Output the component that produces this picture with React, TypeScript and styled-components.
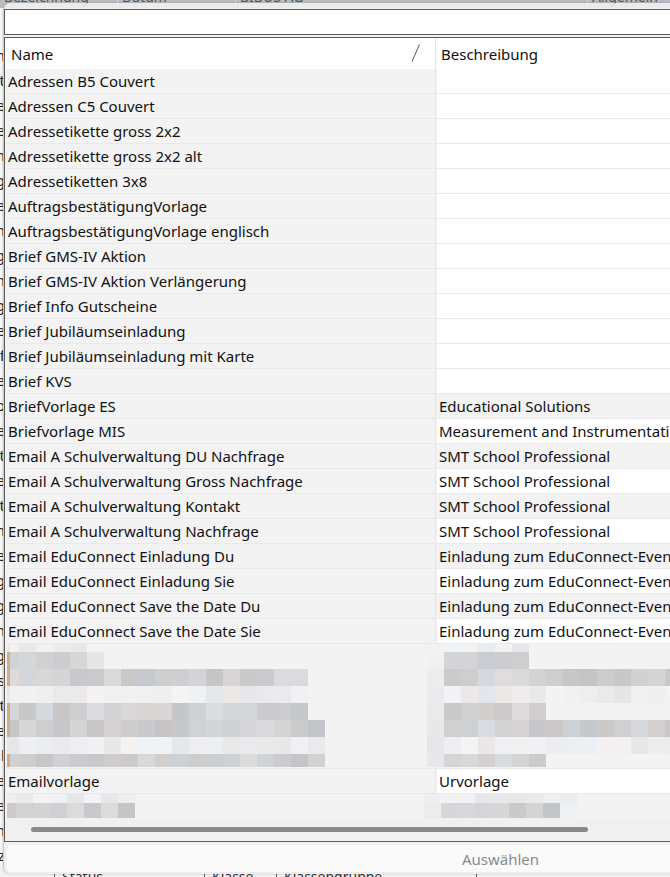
import React from 'react';
import styled, { createGlobalStyle } from 'styled-components';

type Template = {
  name: string;
  description?: string;
  redacted?: number;
};

const templates: Template[] = [
  { name: 'Adressen B5 Couvert' },
  { name: 'Adressen C5 Couvert' },
  { name: 'Adressetikette gross 2x2' },
  { name: 'Adressetikette gross 2x2 alt' },
  { name: 'Adressetiketten 3x8' },
  { name: 'AuftragsbestätigungVorlage' },
  { name: 'AuftragsbestätigungVorlage englisch' },
  { name: 'Brief GMS-IV Aktion' },
  { name: 'Brief GMS-IV Aktion Verlängerung' },
  { name: 'Brief Info Gutscheine' },
  { name: 'Brief Jubiläumseinladung' },
  { name: 'Brief Jubiläumseinladung mit Karte' },
  { name: 'Brief KVS' },
  { name: 'BriefVorlage ES', description: 'Educational Solutions' },
  { name: 'Briefvorlage MIS', description: 'Measurement and Instrumentation Solutions' },
  { name: 'Email A Schulverwaltung DU Nachfrage', description: 'SMT School Professional' },
  { name: 'Email A Schulverwaltung Gross Nachfrage', description: 'SMT School Professional' },
  { name: 'Email A Schulverwaltung Kontakt', description: 'SMT School Professional' },
  { name: 'Email A Schulverwaltung Nachfrage', description: 'SMT School Professional' },
  { name: 'Email EduConnect Einladung Du', description: 'Einladung zum EduConnect-Event' },
  { name: 'Email EduConnect Einladung Sie', description: 'Einladung zum EduConnect-Event' },
  { name: 'Email EduConnect Save the Date Du', description: 'Einladung zum EduConnect-Event' },
  { name: 'Email EduConnect Save the Date Sie', description: 'Einladung zum EduConnect-Event' },
  { name: '', redacted: 1 },
  { name: 'Emailvorlage', description: 'Urvorlage' },
  { name: '', redacted: 2 },
];

const backdropWords = [
  'Vorlagen', 'Couvert', 'Etikette', 'Etikette', 'Adressen', 'Auftrag', 'Vorlage',
  'Aktion', 'Verlängerung', 'Gutschein', 'Einladung', 'Karte', 'Brief', 'Offerte',
  'Info', 'Nachfrage', 'Kontakt', 'Schule', 'Event', 'Datum', 'Urvorlage', 'Rechnung',
  'Mahnung', 'Lieferschein', 'Quittung', 'Status', 'Bericht', 'Liste', 'Profil',
  'Gruppe', 'Klasse', 'Termin', 'Notiz', 'Export',
];

type Tone = 'gray' | 'light';
type Band = { y: number; h: number; tone: Tone; left: [number, number]; right: [number, number] };

const noise = (n: number) => {
  const v = Math.sin(n * 12.9898 + 78.233) * 43758.5453;
  return v - Math.floor(v);
};

const shade = (seed: number, tone: Tone) => {
  const r = noise(seed);
  const t = noise(seed + 0.37);
  const base = tone === 'gray' ? 196 + Math.round(r * 24) : 230 + Math.round(r * 13);
  const warm = Math.round((t - 0.5) * 6);
  return `rgb(${base + warm},${base},${base - warm + 2})`;
};

// columns of the pixel mask: name side snaps to 10/19+17k, description side to 427+17k
const leftCols = (from: number, to: number) => {
  const cols: [number, number][] = [[7, 10], [10, 19]];
  for (let x = 19; x < to; x += 17) cols.push([x, x + 17]);
  return cols.filter(([a]) => a >= from && a < to);
};

const rightCols = (from: number, to: number, anchor = 427) => {
  const cols: [number, number][] = [];
  for (let x = anchor; x < to; x += 17) cols.push([x, x + 17]);
  return cols.filter(([a]) => a >= from);
};

const maskBands: Record<number, Band[]> = {
  1: [
    { y: 0, h: 8, tone: 'light', left: [7, 87], right: [427, 529] },
    { y: 8, h: 17, tone: 'gray', left: [7, 104], right: [427, 529] },
    { y: 25, h: 17, tone: 'gray', left: [7, 308], right: [427, 680] },
    { y: 42, h: 17, tone: 'light', left: [7, 308], right: [427, 680] },
    { y: 59, h: 17, tone: 'gray', left: [7, 308], right: [427, 546] },
    { y: 76, h: 17, tone: 'gray', left: [7, 325], right: [427, 680] },
    { y: 93, h: 17, tone: 'light', left: [7, 325], right: [427, 680] },
    { y: 110, h: 13, tone: 'gray', left: [7, 325], right: [427, 546] },
  ],
  2: [
    { y: 0, h: 9, tone: 'light', left: [7, 135], right: [424, 577] },
    { y: 9, h: 15, tone: 'gray', left: [7, 135], right: [424, 577] },
  ],
};

const Mask = ({ kind, height }: { kind: number; height: number }) => {
  const bands = maskBands[kind];
  const rects: React.ReactNode[] = [];
  bands.forEach((band, b) => {
    const left = kind === 2
      ? [[7, 16] as [number, number], ...rightCols(16, band.left[1], 16)]
      : leftCols(band.left[0], band.left[1]);
    left.forEach(([x0, x1], i) => {
      const strip = kind === 1 && x0 === 7;
      const fill = strip
        ? band.tone === 'gray' ? '#cfae86' : '#ebe8e4'
        : x0 >= band.left[1] - 17 && b === 1 && kind === 1 ? '#e5e6e8' : shade(b * 97 + i * 13 + kind, band.tone);
      rects.push(<rect key={`l${b}-${i}`} x={x0} y={band.y} width={x1 - x0} height={band.h} fill={fill} />);
    });
    const right = kind === 2 ? rightCols(424, band.right[1], 424) : rightCols(band.right[0], band.right[1]);
    right.forEach(([x0, x1], i) => {
      const edge = i === 0 || (kind === 2 && x0 >= 560);
      const tone: Tone = edge ? 'light' : band.tone;
      rects.push(
        <rect key={`r${b}-${i}`} x={x0} y={band.y} width={x1 - x0} height={band.h} fill={shade(b * 53 + i * 7 + 300 + kind, tone)} />
      );
    });
  });
  return (
    <MaskSvg width={680} height={height} viewBox={`5 0 680 ${height}`}>
      {rects}
    </MaskSvg>
  );
};

const SortGlyph = () => (
  <SortSvg width="10" height="18" viewBox="0 0 10 18">
    <line x1="8.5" y1="0.5" x2="1" y2="17.5" stroke="#555" strokeWidth="1" />
  </SortSvg>
);

export default function App() {
  return (
    <Desktop>
      <GlobalStyle />
      <Backdrop>
        <BackHeader>
          <BackHeadCell $w={118}>Bezeichnung</BackHeadCell>
          <BackHeadCell $w={118}>Datum</BackHeadCell>
          <BackHeadCell $w={352}>BIBUS AG</BackHeadCell>
          <BackHeadCell $w={200}>Allgemein</BackHeadCell>
        </BackHeader>
        <BackRows>
          {backdropWords.map((w, i) => (
            <BackRow key={i}>
              <BackClip>{w}</BackClip>
            </BackRow>
          ))}
        </BackRows>
        <BackFooter>
          <BackFootCell $w={55} />
          <BackFootCell $w={150}>Status</BackFootCell>
          <BackFootCell $w={72}>Klasse</BackFootCell>
          <BackFootCell $w={200}>Klassengruppe</BackFootCell>
        </BackFooter>
      </Backdrop>

      <PickerWindow>
        <SearchBox />
        <Grid>
          <HeaderRow>
            <HeaderCell $first>
              Name
              <SortGlyph />
            </HeaderCell>
            <HeaderCell>Beschreibung</HeaderCell>
          </HeaderRow>
          <Body>
            {templates.map((t, i) =>
              t.redacted ? (
                <MaskRow key={i} $h={t.redacted === 1 ? 125 : 25}>
                  <Mask kind={t.redacted} height={t.redacted === 1 ? 124 : 24} />
                </MaskRow>
              ) : (
                <Row key={i}>
                  <NameCell>{t.name}</NameCell>
                  <DescCell $alt={!!t.description && i % 2 === 1}>{t.description}</DescCell>
                </Row>
              )
            )}
          </Body>
          <ScrollTrack>
            <ScrollThumb />
          </ScrollTrack>
        </Grid>
        <SelectButton disabled>Auswählen</SelectButton>
      </PickerWindow>
    </Desktop>
  );
}

const GlobalStyle = createGlobalStyle`
  html, body {
    margin: 0;
    padding: 0;
  }
  body {
    width: 670px;
    height: 877px;
    overflow: hidden;
    background: #f4f4f4;
    font-family: 'Noto Sans', 'Open Sans', sans-serif;
    color: #111111;
  }
  * {
    box-sizing: border-box;
  }
`;

const Desktop = styled.div`
  position: relative;
  width: 670px;
  height: 877px;
  overflow: hidden;
  background: #f7f7f7;
`;

const Backdrop = styled.div`
  display: flex;
  flex-direction: column;
  height: 100%;
`;

const BackHeader = styled.div`
  display: flex;
  height: 22px;
  margin-top: -14px;
  background: #b9bdc1;
  font-size: 14px;
  line-height: 22px;
  color: #555;
`;

const BackHeadCell = styled.div<{ $w: number }>`
  width: ${(p) => p.$w}px;
  flex-shrink: 0;
  padding-left: 4px;
  border-right: 1px solid #d8d8d8;
  white-space: nowrap;
`;

const BackRows = styled.div`
  display: flex;
  flex-direction: column;
  padding-top: 34px;
  flex: 1;
  overflow: hidden;
`;

const BackRow = styled.div`
  height: 25px;
  flex-shrink: 0;
  display: flex;
  align-items: center;
`;

const BackClip = styled.div`
  width: 5px;
  overflow: hidden;
  direction: rtl;
  white-space: nowrap;
  font-size: 15px;
  color: #222;
`;

const BackFooter = styled.div`
  display: flex;
  height: 26px;
  flex-shrink: 0;
  margin-bottom: -16px;
  background: #f2f2f2;
  font-size: 14px;
  line-height: 20px;
  color: #333;
`;

const BackFootCell = styled.div<{ $w: number }>`
  width: ${(p) => p.$w}px;
  flex-shrink: 0;
  padding-left: 7px;
  border-right: 1px solid #555;
  white-space: nowrap;
`;

const PickerWindow = styled.div`
  position: absolute;
  left: 3px;
  top: 3px;
  width: 994px;
  height: 871px;
  display: flex;
  flex-direction: column;
  padding: 6px 1px 1px 1px;
  gap: 2px;
  background: rgba(240, 240, 240, 0.9);
  border-left: 1px solid #c9c9c9;
  border-radius: 7px;
  box-shadow: 0 0 2px rgba(0, 0, 0, 0.25);
`;

const SearchBox = styled.div`
  height: 26px;
  flex-shrink: 0;
  margin-left: -1px;
  background: #ffffff;
  border: 1px solid #5c5c5c;
`;

const Grid = styled.div`
  display: flex;
  flex-direction: column;
  height: 805px;
  flex-shrink: 0;
  margin-left: -1px;
  background: #ffffff;
  border: 1px solid #5c5c5c;
  border-right: none;
`;

const HeaderRow = styled.div`
  display: grid;
  grid-template-columns: 431px 1fr;
  height: 31px;
  flex-shrink: 0;
  background: #ffffff;
`;

const HeaderCell = styled.div<{ $first?: boolean }>`
  display: flex;
  align-items: center;
  justify-content: space-between;
  padding-left: ${(p) => (p.$first ? 6 : 5)}px;
  padding-right: 14px;
  font-size: 15px;
  border-right: ${(p) => (p.$first ? '1px solid #e3e3e3' : 'none')};
`;

const SortSvg = styled.svg`
  display: block;
  margin-top: -2px;
`;

const Body = styled.div`
  flex: 1;
  overflow: hidden;
  display: flex;
  flex-direction: column;
  background: #f3f3f3;
`;

const Row = styled.div`
  display: grid;
  grid-template-columns: 431px 1fr;
  height: 25px;
  flex-shrink: 0;
  border-bottom: 1px solid #e9e9e9;
  font-size: 15px;
`;

const NameCell = styled.div`
  display: flex;
  align-items: center;
  padding-left: 3px;
  background: #f3f3f3;
  border-right: 1px solid #e6e6e6;
  white-space: nowrap;
  overflow: hidden;
`;

const DescCell = styled.div<{ $alt: boolean }>`
  display: flex;
  align-items: center;
  padding-left: 2px;
  margin-left: 1px;
  background: ${(p) => (p.$alt ? '#f3f3f3' : '#ffffff')};
  white-space: nowrap;
  overflow: hidden;
`;

const MaskRow = styled.div<{ $h: number }>`
  height: ${(p) => p.$h}px;
  flex-shrink: 0;
  border-bottom: 1px solid #e9e9e9;
  background: #f3f3f3;
  overflow: hidden;
`;

const MaskSvg = styled.svg`
  display: block;
`;

const ScrollTrack = styled.div`
  height: 23px;
  flex-shrink: 0;
  display: flex;
  align-items: center;
  padding-left: 26px;
  background: #f0f0f0;
`;

const ScrollThumb = styled.div`
  width: 557px;
  height: 5px;
  border-radius: 3px;
  background: #898989;
`;

const SelectButton = styled.button`
  height: 29px;
  flex-shrink: 0;
  margin: 0 1px;
  border: 1px solid #ececec;
  border-radius: 5px;
  background: #fafafa;
  font-family: 'Noto Sans', 'Open Sans', sans-serif;
  font-size: 15px;
  color: #8b8b8b;
  padding: 0;
`;
